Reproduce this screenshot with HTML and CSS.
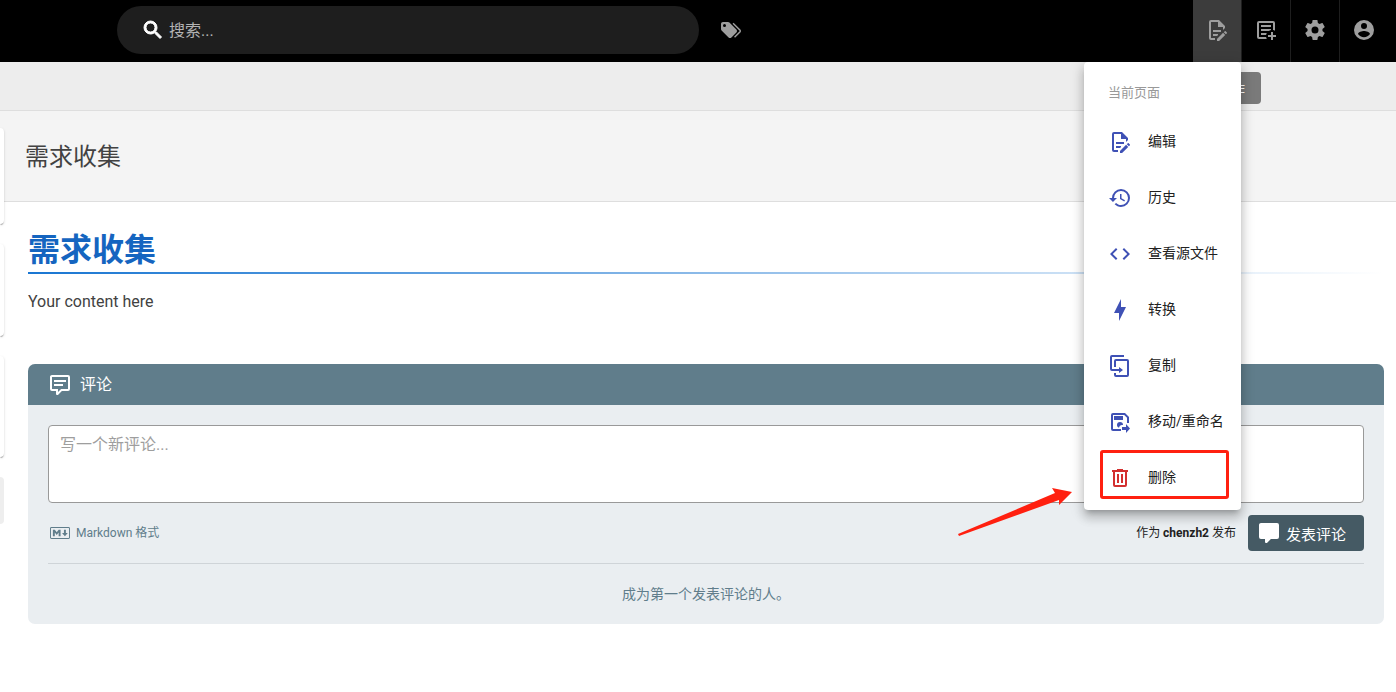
FILE: index.html
```html
<!DOCTYPE html>
<html lang="zh-CN">
<head>
  <meta charset="UTF-8">
  <meta name="viewport" content="width=device-width, initial-scale=1">
  <title>需求收集</title>
  <link rel="stylesheet" href="styles.css">
</head>
<body>

<header class="topbar">
  <label class="search">
    <svg class="icon" viewBox="0 0 24 24"><path d="M9.5,3A6.5,6.5 0 0,1 16,9.5C16,11.11 15.41,12.59 14.44,13.73L14.71,14H15.5L20.5,19L19,20.5L14,15.5V14.71L13.73,14.44C12.59,15.41 11.11,16 9.5,16A6.5,6.5 0 0,1 3,9.5A6.5,6.5 0 0,1 9.5,3M9.5,5C7,5 5,7 5,9.5C5,12 7,14 9.5,14C12,14 14,12 14,9.5C14,7 12,5 9.5,5Z"/></svg>
    <input type="text" placeholder="搜索..." aria-label="搜索">
  </label>
  <a class="tags" href="#" aria-label="标签">
    <svg class="icon" viewBox="0 0 24 24"><path d="M5.5,9A1.5,1.5 0 0,0 7,7.5A1.5,1.5 0 0,0 5.5,6A1.5,1.5 0 0,0 4,7.5A1.5,1.5 0 0,0 5.5,9M17.41,11.58C17.77,11.94 18,12.44 18,13C18,13.55 17.78,14.05 17.41,14.41L12.41,19.41C12.05,19.77 11.55,20 11,20C10.45,20 9.95,19.78 9.58,19.41L2.59,12.42C2.22,12.05 2,11.55 2,11V6C2,4.89 2.89,4 4,4H9C9.55,4 10.05,4.22 10.41,4.58L17.41,11.58M13.54,5.71L14.54,4.71L21.41,11.58C21.78,11.94 22,12.45 22,13C22,13.55 21.78,14.05 21.42,14.41L16.04,19.79L15.04,18.79L20.75,13L13.54,5.71Z"/></svg>
  </a>

  <div class="actions">
    <div class="action open">
      <button class="action-btn" aria-label="当前页面">
        <svg class="icon" viewBox="0 0 24 24"><path d="M8,12H16V14H8V12M10,20H6V4H13V9H18V12.1L20,10.1V8L14,2H6A2,2 0 0,0 4,4V20A2,2 0 0,0 6,22H10V20M8,18H12.1L13,17.1V16H8V18M20.2,13C20.3,13 20.5,13.1 20.6,13.2L21.9,14.5C22.1,14.7 22.1,15.1 21.9,15.3L20.9,16.3L18.8,14.2L19.8,13.2C19.9,13.1 20,13 20.2,13M20.2,16.9L14.1,23H12V20.9L18.1,14.8L20.2,16.9Z"/></svg>
      </button>
      <nav class="menu">
        <div class="menu-title">当前页面</div>
        <a href="#" class="menu-item">
          <svg class="icon" viewBox="0 0 24 24"><path d="M8,12H16V14H8V12M10,20H6V4H13V9H18V12.1L20,10.1V8L14,2H6A2,2 0 0,0 4,4V20A2,2 0 0,0 6,22H10V20M8,18H12.1L13,17.1V16H8V18M20.2,13C20.3,13 20.5,13.1 20.6,13.2L21.9,14.5C22.1,14.7 22.1,15.1 21.9,15.3L20.9,16.3L18.8,14.2L19.8,13.2C19.9,13.1 20,13 20.2,13M20.2,16.9L14.1,23H12V20.9L18.1,14.8L20.2,16.9Z"/></svg>
          <span>编辑</span>
        </a>
        <a href="#" class="menu-item">
          <svg class="icon" viewBox="0 0 24 24"><path d="M13.5,8H12V13L16.28,15.54L17,14.33L13.5,12.25V8M13,3A9,9 0 0,0 4,12H1L4.96,16.03L9,12H6A7,7 0 0,1 13,5A7,7 0 0,1 20,12A7,7 0 0,1 13,19C11.07,19 9.32,18.21 8.06,16.94L6.64,18.36C8.27,20 10.5,21 13,21A9,9 0 0,0 22,12A9,9 0 0,0 13,3Z"/></svg>
          <span>历史</span>
        </a>
        <a href="#" class="menu-item">
          <svg class="icon" viewBox="0 0 24 24"><path d="M14.6,16.6L19.2,12L14.6,7.4L16,6L22,12L16,18L14.6,16.6M9.4,16.6L4.8,12L9.4,7.4L8,6L2,12L8,18L9.4,16.6Z"/></svg>
          <span>查看源文件</span>
        </a>
        <a href="#" class="menu-item">
          <svg class="icon" viewBox="0 0 24 24"><path d="M11,15H6L13,1V9H18L11,23V15Z"/></svg>
          <span>转换</span>
        </a>
        <a href="#" class="menu-item">
          <svg class="icon" viewBox="0 0 24 24"><path d="M11,17H4A2,2 0 0,1 2,15V3A2,2 0 0,1 4,1H16V3H4V15H11V13L15,16L11,19V17M19,21V7H8V13H6V7A2,2 0 0,1 8,5H19A2,2 0 0,1 21,7V21A2,2 0 0,1 19,23H8A2,2 0 0,1 6,21V19H8V21H19Z"/></svg>
          <span>复制</span>
        </a>
        <a href="#" class="menu-item">
          <svg class="icon" viewBox="0 0 24 24"><path d="M17,3H5A2,2 0 0,0 3,5V19A2,2 0 0,0 5,21H13V19H5V5H16.2L19,7.8V13H21V7L17,3M6,6H15V10H6V6M12,12A3,3 0 0,0 9,15C9,16.3 9.8,17.4 11,17.8C11.2,16.2 12.5,15 14,15H15A3,3 0 0,0 12,12M18,14V17H14V20H18V23L22,18.5L18,14Z"/></svg>
          <span>移动/重命名</span>
        </a>
        <a href="#" class="menu-item delete">
          <svg class="icon" viewBox="0 0 24 24"><path d="M9,3V4H4V6H5V19A2,2 0 0,0 7,21H17A2,2 0 0,0 19,19V6H20V4H15V3H9M7,6H17V19H7V6M9,8V17H11V8H9M13,8V17H15V8H13Z"/></svg>
          <span>删除</span>
          <i class="marker"></i>
          <svg class="arrow" viewBox="0 0 116 52"><path d="M1,48L98,7L95,2L115,6L102,19L102,14L2,50Z"/></svg>
        </a>
      </nav>
    </div>
    <div class="action">
      <button class="action-btn" aria-label="新建页面">
        <svg class="icon" viewBox="0 0 24 24"><path d="M17,14H19V17H22V19H19V22H17V19H14V17H17V14M5,3H19A2,2 0 0,1 21,5V12.8C20.4,12.4 19.7,12.2 19,12.1V5H5V19H12.1C12.2,19.7 12.4,20.4 12.8,21H5A2,2 0 0,1 3,19V5A2,2 0 0,1 5,3M7,7H17V9H7V7M7,11H17V12.1C16.2,12.3 15.4,12.6 14.8,13H7V11M7,15H12.8C12.4,15.6 12.2,16.3 12.1,17H7V15Z"/></svg>
      </button>
    </div>
    <div class="action">
      <button class="action-btn" aria-label="管理">
        <svg class="icon" viewBox="0 0 24 24"><path d="M12,15.5A3.5,3.5 0 0,1 8.5,12A3.5,3.5 0 0,1 12,8.5A3.5,3.5 0 0,1 15.5,12A3.5,3.5 0 0,1 12,15.5M19.43,12.97C19.47,12.65 19.5,12.33 19.5,12C19.5,11.67 19.47,11.34 19.43,11L21.54,9.37C21.73,9.22 21.78,8.95 21.66,8.73L19.66,5.27C19.54,5.05 19.27,4.96 19.05,5.05L16.56,6.05C16.04,5.66 15.5,5.32 14.87,5.07L14.5,2.42C14.46,2.18 14.25,2 14,2H10C9.75,2 9.54,2.18 9.5,2.42L9.13,5.07C8.5,5.32 7.96,5.66 7.44,6.05L4.95,5.05C4.73,4.96 4.46,5.05 4.34,5.27L2.34,8.73C2.21,8.95 2.27,9.22 2.46,9.37L4.57,11C4.53,11.34 4.5,11.67 4.5,12C4.5,12.33 4.53,12.65 4.57,12.97L2.46,14.63C2.27,14.78 2.21,15.05 2.34,15.27L4.34,18.73C4.46,18.95 4.73,19.03 4.95,18.95L7.44,17.94C7.96,18.34 8.5,18.68 9.13,18.93L9.5,21.58C9.54,21.82 9.75,22 10,22H14C14.25,22 14.46,21.82 14.5,21.58L14.87,18.93C15.5,18.67 16.04,18.34 16.56,17.94L19.05,18.95C19.27,19.03 19.54,18.95 19.66,18.73L21.66,15.27C21.78,15.05 21.73,14.78 21.54,14.63L19.43,12.97Z"/></svg>
      </button>
    </div>
    <div class="action">
      <button class="action-btn" aria-label="账户">
        <svg class="icon" viewBox="0 0 24 24"><path d="M12,19.2C9.5,19.2 7.29,17.92 6,16C6.03,14 10,12.9 12,12.9C14,12.9 17.97,14 18,16C16.71,17.92 14.5,19.2 12,19.2M12,5A3,3 0 0,1 15,8A3,3 0 0,1 12,11A3,3 0 0,1 9,8A3,3 0 0,1 12,5M12,2A10,10 0 1,0 22,12A10,10 0 0,0 12,2Z"/></svg>
      </button>
    </div>
  </div>
</header>

<main class="page">
  <div class="toolbar">
    <button class="toolbar-btn">操作</button>
  </div>
  <div class="page-title">需求收集</div>

  <!-- Right edge of the sidebar cards -->
  <aside class="sidebar">
    <div class="side-card toc"></div>
    <div class="side-card"></div>
    <div class="side-card author"></div>
    <div class="side-card share"></div>
  </aside>

  <article class="content">
    <h1>需求收集</h1>
    <p>Your content here</p>
  </article>

  <section class="comments">
    <h2 class="comments-header">
      <svg class="icon" viewBox="0 0 24 24"><path d="M9,22A1,1 0 0,1 8,21V18H4A2,2 0 0,1 2,16V4C2,2.89 2.9,2 4,2H20A2,2 0 0,1 22,4V16A2,2 0 0,1 20,18H13.9L10.2,21.71C10,21.9 9.75,22 9.5,22H9M10,16V19.08L13.08,16H20V4H4V16H10M6,7H18V9H6V7M6,11H15V13H6V11Z"/></svg>
      <span>评论</span>
    </h2>
    <form class="comments-body">
      <textarea placeholder="写一个新评论..." aria-label="写一个新评论"></textarea>
      <div class="comments-footer">
        <svg class="icon md" viewBox="0 0 24 24"><path d="M20.56 18H3.44C2.65 18 2 17.37 2 16.59V7.41C2 6.63 2.65 6 3.44 6H20.56C21.35 6 22 6.63 22 7.41V16.59C22 17.37 21.35 18 20.56 18M3.44 6.94C3.18 6.94 2.96 7.15 2.96 7.41V16.6C2.96 16.85 3.18 17.06 3.44 17.06H20.56C20.82 17.06 21.04 16.85 21.04 16.6V7.41C21.04 7.15 20.82 6.94 20.56 6.94H3.44M4.89 15.19V8.81H6.81L8.73 11.16L10.65 8.81H12.58V15.19H10.65V11.53L8.73 13.88L6.81 11.53V15.19H4.89M16.9 15.19L14 12.09H15.94V8.81H17.86V12.09H19.79L16.9 15.19"/></svg>
        <span class="format">Markdown 格式</span>
        <span class="posting-as">作为 <strong>chenzh2</strong> 发布</span>
        <button type="button" class="post-btn">
          <svg class="icon" viewBox="0 0 24 24"><path d="M9,22A1,1 0 0,1 8,21V18H4A2,2 0 0,1 2,16V4C2,2.89 2.9,2 4,2H20A2,2 0 0,1 22,4V16A2,2 0 0,1 20,18H13.9L10.2,21.71C10,21.9 9.75,22 9.5,22H9Z"/></svg>
          <span>发表评论</span>
        </button>
      </div>
      <p class="empty">成为第一个发表评论的人。</p>
    </form>
  </section>
</main>

</body>
</html>
```

FILE: styles.css
```css
* { box-sizing: border-box; }
body {
  margin: 0; background: #fff; color: #424242;
  font-family: Roboto, "Noto Sans CJK SC", sans-serif;
  font-size: 14px; line-height: 20px;
}
a { color: inherit; text-decoration: none; }
button, input, textarea { font-family: inherit; }
.icon { width: 24px; height: 24px; fill: currentColor; flex: none; display: block; }

/* Top bar */
.topbar {
  display: flex; align-items: center; height: 62px;
  padding: 0 8px 0 117px; background: #000; color: #9e9e9e;
}
.search {
  display: flex; align-items: center; flex: 0 1 582px; height: 48px;
  padding: 0 24px; border-radius: 24px; background: #1e1e1e; margin-bottom: 2px;
}
.search .icon { color: #fff; stroke: currentColor; stroke-width: 1px; }
.search input {
  flex: 1; min-width: 0; border: none; outline: none; background: none;
  padding: 2px 4px 0; color: #fff; font-size: 16px; line-height: 24px;
}
.search input::placeholder { color: #b3b3b3; }
.tags { margin: 0 0 2px 20px; }
.actions { display: flex; margin-left: auto; height: 100%; }
.action { position: relative; }
.action + .action { border-left: 1px solid #1e1e1e; }
.action-btn {
  display: flex; align-items: center; justify-content: center;
  width: 48px; height: 100%; padding: 0 0 2px; border: none;
  background: none; color: #9e9e9e; cursor: pointer;
}
.action.open .action-btn { background: #3c3c3c; }

/* Page menu */
.menu {
  position: absolute; top: 100%; right: 0; z-index: 10; width: 157px;
  padding: 10px 0 4px; background: #fff; border-radius: 4px; color: #212121;
  box-shadow: 0 5px 5px -3px #0003, 0 8px 10px 1px #0002, 0 3px 14px 2px #0002;
}
.menu-title { padding: 0 24px; line-height: 42px; font-size: 13px; color: #999; }
.menu-item {
  position: relative; display: flex; align-items: center; gap: 16px;
  height: 56px; padding: 0 0 0 24px; white-space: nowrap;
}
.menu-item span { padding-bottom: 2px; }
.menu-item .icon { color: #3f51b5; }
.menu-item.delete .icon { color: #d32f2f; }
.marker {
  position: absolute; top: 0; left: 16px; right: 12px; height: 49px;
  border: 3px solid #ff2010; border-radius: 3px;
}
.arrow {
  position: absolute; top: 36px; right: 100%; width: 116px; height: 52px;
  margin-right: 11px; fill: #ff2010;
}

/* Page head */
.page { position: relative; }
.toolbar {
  display: flex; align-items: center; justify-content: flex-end; height: 49px;
  padding: 4px 135px 0 0; background: #ededed; border-bottom: 1px solid #dedede;
}
.toolbar-btn {
  height: 32px; padding: 0 16px; border: none; border-radius: 4px;
  background: #7a7a7a; color: #fff; font-size: 13px;
}
.page-title {
  padding: 30px 25px 28px; background: #f4f4f4; border-bottom: 1px solid #dedede;
  font-size: 24px; line-height: 32px;
}

.sidebar {
  position: absolute; top: 66px; left: 0; width: 4px;
  display: flex; flex-direction: column; gap: 20px;
}
.side-card {
  height: 92px; background: #fff; border-radius: 0 4px 4px 0;
  box-shadow: 0 2px 1px -1px #0003, 0 1px 1px #0002, 0 1px 3px #0002;
}
.side-card.toc { height: 96px; }
.side-card.author { height: 101px; }
.side-card.share { height: 47px; background: #eee; box-shadow: none; }

/* Article */
.content { padding: 24px 12px 0 28px; }
.content h1 {
  margin: 0; color: #1565c0; font-size: 32px; line-height: 48px;
  background: linear-gradient(to right, #1976d2, #1976d200) left bottom / 100% 2px no-repeat;
}
.content p { margin: 16px 0 0; font-size: 16px; line-height: 24px; }

/* Comments */
.comments {
  margin: 50px 12px 0 28px; border-radius: 7px; overflow: hidden; background: #eaeef1;
}
.comments-header {
  display: flex; align-items: center; gap: 8px; height: 41px; margin: 0;
  padding: 0 20px; background: #607d8b; color: #fff; font-size: 16px; font-weight: 400;
}
.comments-body { padding: 20px 20px 0; }
textarea {
  display: block; width: 100%; height: 78px; padding: 7px 11px; resize: none;
  border: 1px solid #999; border-radius: 4px; background: #fff;
  color: #424242; font-size: 16px; line-height: 24px;
}
textarea::placeholder { color: #9e9e9e; }
.comments-footer {
  display: flex; align-items: center; padding: 12px 0; border-bottom: 1px solid #cfd4d8;
}
.comments-footer .md { color: #607d8b; }
.format { margin-left: 4px; font-size: 12px; color: #607d8b; }
.posting-as { margin-left: auto; font-size: 12px; color: #212121; }
.post-btn {
  display: flex; align-items: center; gap: 5px; height: 36px; margin-left: 12px;
  padding: 0 18px 0 9px; border: none; border-radius: 4px;
  background: #455a64; color: #fff; font-size: 15px; cursor: pointer;
}
.empty { margin: 0; padding: 20px 0; text-align: center; color: #607d8b; }
```
